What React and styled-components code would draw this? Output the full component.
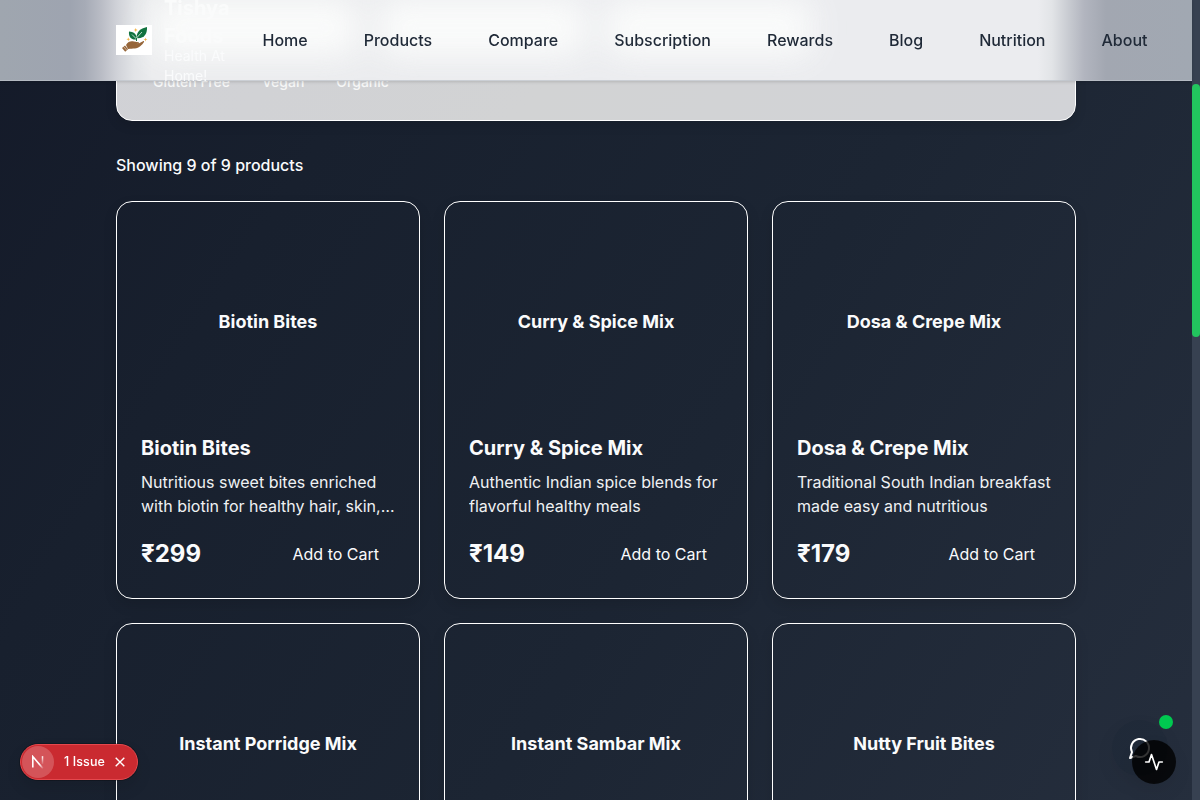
import React from "react";
import styled, { createGlobalStyle } from "styled-components";

const Global = createGlobalStyle`
  *, *::before, *::after { box-sizing: border-box; }
  html, body, #root { height: 100%; }
  body {
    margin: 0;
    overflow: hidden;
    font-family: Inter, "Liberation Sans", sans-serif;
    font-size: 16px;
    line-height: 24px;
    color: #fafbfc;
    -webkit-font-smoothing: antialiased;
  }
  h3, p { margin: 0; }
  button { font: inherit; color: inherit; background: none; border: 0; }
`;

const Screen = styled.div`
  display: flex;
  height: 800px;
  overflow: hidden;
  background: linear-gradient(122deg, #141a29 0%, #18202e 24%, #1c2533 58%, #252e3d 100%);
`;

const Viewport = styled.div`
  flex: 1;
  height: 800px;
  overflow: hidden;
`;

const ScrollTrack = styled.div`
  width: 8px;
  padding-top: 84px;
  background: #374151;
`;

const ScrollThumb = styled.div`
  height: 253px;
  border-radius: 4px;
  background: #22c55e;
`;

const Header = styled.header`
  position: fixed;
  top: 0;
  left: 0;
  z-index: 10;
  width: 1192px;
  height: 81px;
  padding: 0 0 2px 116px;
  display: flex;
  align-items: center;
  box-shadow: 0 1px 3px rgba(0, 0, 0, 0.15);
`;

const Frost = styled.div`
  position: absolute;
  inset: 0;
  z-index: -1;
  overflow: hidden;
  border-bottom: 1px solid rgba(190, 195, 202, 0.7);
  background: linear-gradient(
    90deg,
    #9fa6af 0,
    #9ea4b0 70px,
    #a6abb6 85px,
    #b9bcc5 101px,
    #d0d2d8 117px,
    #e2e4e7 134px,
    #ebecee 152px,
    #ebecef 600px,
    #ebecef 1038px,
    #e2e4e7 1052px,
    #c9ccd2 1068px,
    #b2b5bf 1084px,
    #a2a7b1 1106px,
    #a1a8b2 1192px
  );
`;

const FrostGlow = styled.div`
  display: grid;
  grid-template-columns: repeat(3, 204px);
  gap: 23px;
  margin: 0 0 0 153px;
  filter: blur(16px);
  opacity: 0.88;

  i {
    height: 56px;
    border-radius: 12px;
    background: #fdfefd;
  }
`;

const Brand = styled.div`
  width: 146.5px;
  display: flex;
  align-items: center;
  gap: 12px;
`;

const Logo = styled.svg`
  width: 36px;
  height: 30px;
  flex: none;
  background: #fff;
`;

const BrandText = styled.div`
  width: 76px;
`;

const BrandName = styled.div`
  font-size: 20px;
  line-height: 28px;
  font-weight: 700;
  color: #fafbfb;
`;

const Tagline = styled.div`
  margin-top: -4px;
  font-size: 14px;
  line-height: 20px;
  color: #fafbfc;
`;

const Nav = styled.nav`
  display: flex;
  gap: 56px;
  font-weight: 500;
  color: #1f2937;
  white-space: nowrap;
`;

const Main = styled.main`
  width: 960px;
  margin: 0 116px;
`;

const Filters = styled.section`
  margin-top: -45px;
  height: 166px;
  padding: 116px 36px 0;
  border: 1px solid #fff;
  border-radius: 16px;
  background: linear-gradient(135deg, #d0d1d6, #d2d3d4 50%, #d2d3d7);
  box-shadow: 0 4px 12px rgba(0, 0, 0, 0.12);
`;

const DietTags = styled.div`
  display: flex;
  gap: 32px;
  font-size: 14px;
  line-height: 20px;
  font-weight: 500;
  color: #f6f7f7;
`;

const Count = styled.p`
  margin: 32px 0 24px;
  font-weight: 500;
`;

const Grid = styled.section`
  display: grid;
  grid-template-columns: repeat(3, 1fr);
  gap: 24px;
`;

const Card = styled.article`
  height: 398px;
  padding: 24px;
  border: 1px solid #fff;
  border-radius: 16px;
  box-shadow: 0 6px 14px rgba(0, 0, 0, 0.12);
`;

const Picture = styled.div`
  height: 192px;
  margin-bottom: 16px;
  display: flex;
  align-items: center;
  justify-content: center;
  font-size: 18px;
  font-weight: 700;
`;

const Title = styled.h3`
  font-size: 20px;
  line-height: 28px;
  font-weight: 700;
`;

const Description = styled.p`
  margin: 8px 0 16px;
  height: 48px;
  color: #eff1f3;
  display: -webkit-box;
  -webkit-box-orient: vertical;
  -webkit-line-clamp: 2;
  overflow: hidden;
`;

const Purchase = styled.div`
  display: flex;
  align-items: center;
  justify-content: space-between;
`;

const Price = styled.span`
  font-size: 24px;
  line-height: 32px;
  font-weight: 700;
`;

const AddButton = styled.button`
  height: 40px;
  padding: 0 16px;
`;

const IssueBadge = styled.div`
  position: fixed;
  left: 20px;
  top: 744px;
  z-index: 20;
  width: 118px;
  height: 36px;
  padding-left: 1px;
  display: flex;
  align-items: center;
  border: 1px solid #e5484d;
  border-radius: 18px;
  background: #ca2a30;
  box-shadow: 0 0 0 1px rgba(0, 0, 0, 0.25), 0 8px 16px rgba(0, 0, 0, 0.1);
  font-size: 12.5px;
  color: #fff;
`;

const NextMark = styled.div`
  width: 32px;
  height: 32px;
  margin-right: 10px;
  display: grid;
  place-items: center;
  border-radius: 50%;
  background: rgba(255, 255, 255, 0.2);
`;

const IssueText = styled.span`
  width: 51px;
  white-space: nowrap;
  font-weight: 500;
  letter-spacing: 0.1px;
`;

const CircleButton = styled.button`
  position: fixed;
  left: ${(p) => p.$x}px;
  top: ${(p) => p.$y}px;
  z-index: ${(p) => p.$layer};
  width: ${(p) => p.$size}px;
  height: ${(p) => p.$size}px;
  padding: 0;
  display: grid;
  place-items: center;
  border-radius: 50%;
  background: ${(p) => p.$fill};
  box-shadow: 0 8px 20px rgba(0, 0, 0, 0.06);
`;

const OnlineDot = styled.span`
  position: fixed;
  left: 1159px;
  top: 715px;
  z-index: 23;
  width: 14px;
  height: 14px;
  border-radius: 50%;
  background: #00c950;
`;

const NAV = ["Home", "Products", "Compare", "Subscription", "Rewards", "Blog", "Nutrition", "About"];

const PRODUCTS = [
  ["Biotin Bites", "Nutritious sweet bites enriched with biotin for healthy hair, skin, and nails every day", "₹299"],
  ["Curry & Spice Mix", "Authentic Indian spice blends for flavorful healthy meals", "₹149"],
  ["Dosa & Crepe Mix", "Traditional South Indian breakfast made easy and nutritious", "₹179"],
  ["Instant Porridge Mix"],
  ["Instant Sambar Mix"],
  ["Nutty Fruit Bites"],
];

function BrandLogo() {
  return (
    <Logo viewBox="0 0 36 30">
      <path d="M20.5 13C20.5 7 24 3.5 31 2C31.3 8 29 13 22 13.2Z" fill="#12733f" />
      <path d="M13 6.5C17 7 21 8 20.5 14.5C15 15 12.5 12 13 6.5Z" fill="#12733f" />
      <path d="M20.5 16V13L26 7M20.5 14L16 9.5" stroke="#fff" strokeWidth=".7" fill="none" />
      <path d="M20.5 16V13" stroke="#12733f" strokeWidth="1" />
      <path d="M10 20C12 16.5 15 15.8 18 16.6L22.5 17.2C24 18 22.5 19.3 18 19.2C22 20 24.5 17 27.5 16C29 16 27.5 18.5 24.5 21C21 24 17 23.5 12 24Z" fill="#96663a" />
      <path d="M9 20.5L12 24.3L9.2 26.7L6 23Z" fill="#96663a" />
      <path d="M7.5 21.5L11 25.5" stroke="#fff" strokeWidth=".5" />
      <g fill="#f3b13f">
        <path d="M19.7 3L20.3 4.5L21.7 5L20.3 5.6L19.7 7L19.1 5.6L17.7 5L19.1 4.5Z" />
        <path d="M12.3 12.3L12.8 13.8L14.2 14.3L12.8 14.8L12.3 16.2L11.8 14.8L10.4 14.3L11.8 13.8Z" />
        <path d="M29.5 12.5L30 14L31.4 14.5L30 15L29.5 16.5L29 15L27.6 14.5L29 14Z" />
      </g>
    </Logo>
  );
}

export default function App() {
  return (
    <>
      <Global />
      <Screen>
        <Viewport>
          <Main>
            <Filters>
              <DietTags>
                <span>Gluten Free</span>
                <span>Vegan</span>
                <span>Organic</span>
              </DietTags>
            </Filters>
            <Count>Showing 9 of 9 products</Count>
            <Grid>
              {PRODUCTS.map(([name, description, price]) => (
                <Card key={name}>
                  <Picture>{name}</Picture>
                  {price && (
                    <>
                      <Title>{name}</Title>
                      <Description>{description}</Description>
                      <Purchase>
                        <Price>{price}</Price>
                        <AddButton>Add to Cart</AddButton>
                      </Purchase>
                    </>
                  )}
                </Card>
              ))}
            </Grid>
          </Main>
        </Viewport>
        <ScrollTrack>
          <ScrollThumb />
        </ScrollTrack>
      </Screen>
      <Header>
        <Frost>
          <FrostGlow>
            <i />
            <i />
            <i />
          </FrostGlow>
        </Frost>
        <Brand>
          <BrandLogo />
          <BrandText>
            <BrandName>Tishya Foods</BrandName>
            <Tagline>Health At Home!</Tagline>
          </BrandText>
        </Brand>
        <Nav>
          {NAV.map((label) => (
            <span key={label}>{label}</span>
          ))}
        </Nav>
      </Header>
      <IssueBadge>
        <NextMark>
          <svg width="14" height="14" viewBox="0 0 14 14" fill="none">
            <defs>
              <linearGradient id="diagonal" x1="7" y1="7" x2="12" y2="14" gradientUnits="userSpaceOnUse">
                <stop offset=".3" stopColor="#fff" />
                <stop offset="1" stopColor="#fff" stopOpacity="0" />
              </linearGradient>
              <linearGradient id="stem" x1="11" y1="1" x2="11" y2="10" gradientUnits="userSpaceOnUse">
                <stop stopColor="#fff" />
                <stop offset="1" stopColor="#fff" stopOpacity="0" />
              </linearGradient>
            </defs>
            <path d="M1.8 12.4V1.6L12 13.6" stroke="url(#diagonal)" strokeWidth="1.6" />
            <path d="M11.5 1.2V9" stroke="url(#stem)" strokeWidth="1.5" />
          </svg>
        </NextMark>
        <IssueText>1 Issue</IssueText>
        <svg width="10" height="10" viewBox="0 0 10 10" stroke="#fff" strokeWidth="1.4">
          <path d="M.7 .7L9.3 9.3M9.3 .7L.7 9.3" />
        </svg>
      </IssueBadge>
      <CircleButton $x={1112} $y={720} $size={56} $layer={21} $fill="rgba(25, 37, 51, 0.35)">
        <svg width="24" height="24" viewBox="0 0 24 24" fill="none" stroke="#fff" strokeWidth="2" strokeLinecap="round" strokeLinejoin="round">
          <path d="M7.9 20A9 9 0 1 0 4 16.1L2 22Z" />
        </svg>
      </CircleButton>
      <CircleButton $x={1132} $y={740} $size={44} $layer={22} $fill="rgba(0, 0, 0, 0.8)">
        <svg width="20" height="20" viewBox="0 0 24 24" fill="none" stroke="#fff" strokeWidth="2" strokeLinecap="round" strokeLinejoin="round">
          <path d="M22 12h-4l-3 9L9 3l-3 9H2" />
        </svg>
      </CircleButton>
      <OnlineDot />
    </>
  );
}
